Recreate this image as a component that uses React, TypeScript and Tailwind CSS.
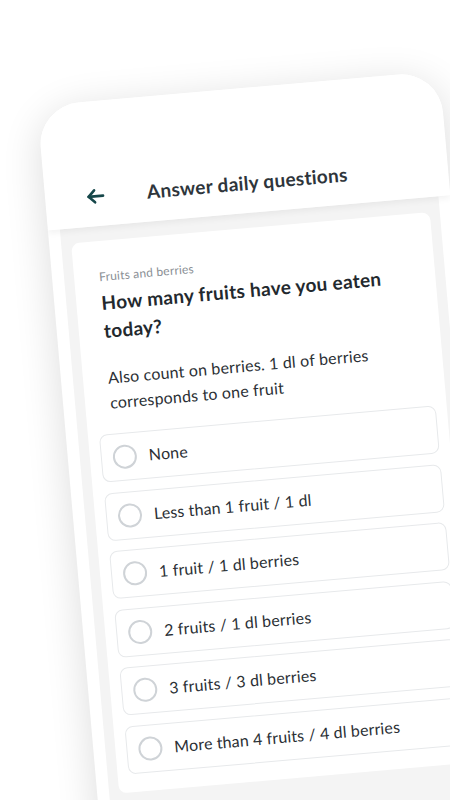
import React from "react";

const options = [
  "None",
  "Less than 1 fruit / 1 dl",
  "1 fruit / 1 dl berries",
  "2 fruits / 1 dl berries",
  "3 fruits / 3 dl berries",
  "More than 4 fruits / 4 dl berries",
];

export default function App() {
  return (
    <div className="w-[450px] h-[800px] overflow-hidden bg-white" style={{ fontFamily: "Lato, 'Open Sans', sans-serif" }}>
      <div className="ml-[37px] mt-[106px] w-[404px] h-[900px] origin-top-left rotate-[-5deg] rounded-[42px] bg-white shadow-[0_8px_40px_rgba(0,0,0,0.14)] overflow-hidden flex flex-col">
        <div className="relative z-10 h-[125px] flex flex-col justify-end bg-white shadow-[0_3px_6px_rgba(0,0,0,0.05)]">
          <div className="h-[60px] flex items-center pl-[41px]">
            <svg width="19" height="16" viewBox="0 0 19 16" fill="none" stroke="#16474a" strokeWidth="2.6" strokeLinecap="round" strokeLinejoin="round">
              <path d="M17 8H2.5" />
              <path d="M8.5 2L2.5 8l6 6" />
            </svg>
            <span className="ml-[42px] text-[19px] font-bold text-[#2e353b] tracking-[0.3px]">Answer daily questions</span>
          </div>
        </div>
        <div className="flex-1 mx-[12px] bg-[#f4f4f4] px-[10px] pt-[15px]">
          <div className="w-[360px] bg-white rounded-[8px] px-[11px] pt-[28px] pb-[18px]">
            <div className="px-[14px]">
              <div className="text-[12px] leading-[15px] text-[#8a8f95] tracking-[0.2px]">Fruits and berries</div>
              <div className="mt-[5px] text-[19px] leading-[28px] font-bold text-[#23292e] tracking-[0.3px]">How many fruits have you eaten today?</div>
              <div className="mt-[20px] text-[16px] leading-[25px] text-[#2b3035] tracking-[0.2px]">Also count on berries. 1 dl of berries corresponds to one fruit</div>
            </div>
            <div className="mt-[19px] flex flex-col gap-[10.5px]">
              {options.map((o) => (
                <div key={o} className="h-[48px] flex items-center rounded-[8px] border border-[#e7e9eb] pl-[11px]">
                  <div className="w-[24px] h-[24px] rounded-full border-2 border-[#cfd3d7] shrink-0" />
                  <span className="ml-[12px] text-[16px] text-[#2b3035] tracking-[0.15px]">{o}</span>
                </div>
              ))}
            </div>
          </div>
        </div>
      </div>
    </div>
  );
}
